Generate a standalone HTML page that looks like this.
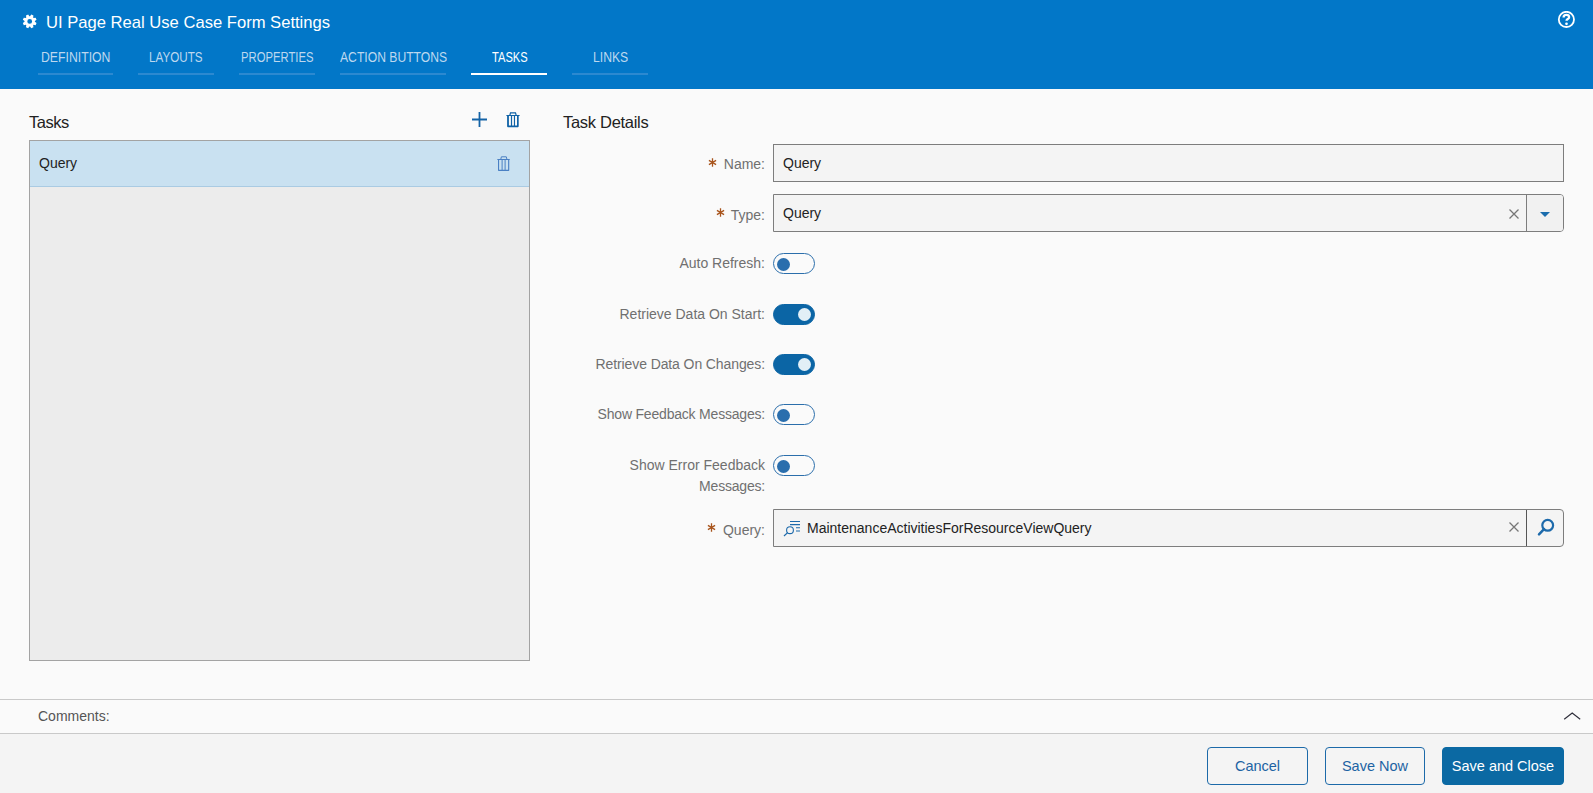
<!DOCTYPE html>
<html><head><meta charset="utf-8">
<style>
*{box-sizing:border-box;margin:0;padding:0}
html,body{width:1593px;height:793px;overflow:hidden;background:#fafafa;font-family:"Liberation Sans",sans-serif;color:#222}
.abs{position:absolute}
#hdr{position:absolute;left:0;top:0;width:1593px;height:89px;background:#0277c8}
#title{position:absolute;left:46px;top:12px;font-size:16.6px;color:#fff;line-height:22px;white-space:nowrap}
.ul{position:absolute;top:73px;height:2px;background:#2c89d0}
.ul.act{background:#fff}
.tt{position:absolute;top:47px;font-size:14px;line-height:20px;color:#bdd8ef;white-space:nowrap;transform-origin:0 0}
.tt.act{color:#fff}
.lbl{position:absolute;font-size:14px;color:#707070;text-align:right;white-space:nowrap;line-height:20px}
.inp{position:absolute;left:773px;width:791px;height:38px;background:#f4f4f4;border:1px solid #7d7d7d}
.itxt{position:absolute;font-size:14px;color:#222;line-height:20px;white-space:nowrap}
.tg{position:absolute;left:773px;width:42px;height:21px;border:1.5px solid #2b6eab;border-radius:11px}
.tg b{position:absolute;left:3px;top:3.5px;width:13px;height:13px;border-radius:50%;background:#2a6ead}
.tg.on{background:#0b65a5;border-color:#0b65a5}
.tg.on b{left:23.5px;top:2.7px;background:#e2eff6}
.btn{position:absolute;top:747px;height:38px;border:1px solid #1c6aa9;border-radius:4px;font-size:14.5px;color:#1d63a3;text-align:center;line-height:36px;background:#f4f4f4}
</style></head>
<body>
<div id="hdr">
  <svg class="abs" style="left:22px;top:14px" width="16" height="16" viewBox="0 0 16 16"><path fill="#fff" fill-rule="evenodd" d="M8.04 2.21 L9.24 0.57 L11.44 1.48 L11.13 3.49 L11.61 3.97 L13.62 3.66 L14.53 5.86 L12.89 7.06 L12.89 7.74 L14.53 8.94 L13.62 11.14 L11.61 10.83 L11.13 11.31 L11.44 13.32 L9.24 14.23 L8.04 12.59 L7.36 12.59 L6.16 14.23 L3.96 13.32 L4.27 11.31 L3.79 10.83 L1.78 11.14 L0.87 8.94 L2.51 7.74 L2.51 7.06 L0.87 5.86 L1.78 3.66 L3.79 3.97 L4.27 3.49 L3.96 1.48 L6.16 0.57 L7.36 2.21Z M10.10 7.40 A2.4 2.4 0 1 0 5.30 7.40 A2.4 2.4 0 1 0 10.10 7.40Z"/></svg>
  <div id="title">UI Page Real Use Case Form Settings</div>
  <div class="tt" style="left:40.8px;transform:scaleX(0.875)">DEFINITION</div>
  <div class="tt" style="left:149px;transform:scaleX(0.833)">LAYOUTS</div>
  <div class="tt" style="left:240.8px;transform:scaleX(0.806)">PROPERTIES</div>
  <div class="tt" style="left:340px;transform:scaleX(0.868)">ACTION BUTTONS</div>
  <div class="tt act" style="left:491.6px;transform:scaleX(0.795)">TASKS</div>
  <div class="tt" style="left:592.6px;transform:scaleX(0.87)">LINKS</div>
  <div class="ul" style="left:38px;width:75px"></div>
  <div class="ul" style="left:138px;width:76px"></div>
  <div class="ul" style="left:239px;width:76px"></div>
  <div class="ul" style="left:340px;width:106px"></div>
  <div class="ul act" style="left:471px;width:76px"></div>
  <div class="ul" style="left:572px;width:76px"></div>
  <svg class="abs" style="left:1557px;top:11px" width="19" height="19" viewBox="0 0 19 19"><circle cx="9.4" cy="8.4" r="7.6" fill="none" stroke="#fff" stroke-width="1.8"/><path d="M6.6 6.5c0-1.7 1.2-2.6 2.8-2.6s2.7.9 2.7 2.3c0 1.9-2.6 1.8-2.6 3.5" fill="none" stroke="#fff" stroke-width="2.3"/><circle cx="9.5" cy="12.8" r="1.35" fill="#fff"/></svg>
</div>

<!-- left tasks panel -->
<div class="abs" style="left:29px;top:111px;font-size:16.5px;line-height:22px;color:#222;letter-spacing:-0.5px">Tasks</div>
<svg class="abs" style="left:472px;top:112px" width="15" height="15" viewBox="0 0 15 15"><path d="M7.5 0v15M0 7.5h15" stroke="#1463a6" stroke-width="1.8"/></svg>
<svg class="abs" style="left:502px;top:108px" width="22" height="22" viewBox="0 0 22 22"><path d="M7.9 7.2L8.5 4.9H13.5L14.1 7.2" fill="none" stroke="#0f62a6" stroke-width="1.2"/><path fill="#0f62a6" d="M4.2 6.9H17.8L17.4 8.1H4.6z M5.1 8H6.9V17.4H15V8H16.7V18.6L16 19.2H5.8L5.1 18.6z M8.9 8H10.1V17.5H8.9z M11.9 8H13.05V17.5H11.9z"/></svg>
<div class="abs" style="left:29px;top:140px;width:501px;height:521px;background:#ececec;border:1px solid #a3a3a3">
  <div class="abs" style="left:0;top:0;width:499px;height:46px;background:#c9e1f1;border-bottom:1px solid #aacbe3"></div>
  <div class="abs" style="left:9px;top:12px;font-size:14px;line-height:20px;color:#222">Query</div>
  <svg class="abs" style="left:463px;top:11px" width="22" height="22" viewBox="0 0 22 22"><path d="M7.8 7.2L8.4 4.8H13.3L13.9 7.2" fill="none" stroke="#4a80c4" stroke-width="1"/><path fill="#4a80c4" d="M4.2 6.9H16.9L16.6 8H4.5z M5 8H6.1V17.8H15.1V8H16.25V18.5L15.7 18.9H5.6L5 18.5z M8.6 8H9.6V17.8H8.6z M11.6 8H12.6V17.8H11.6z"/></svg>
</div>

<!-- right details -->
<div class="abs" style="left:563px;top:111px;font-size:16.5px;line-height:22px;color:#222;letter-spacing:-0.3px">Task Details</div>

<svg class="abs" style="left:708px;top:158px" width="9" height="9" viewBox="0 0 9 9"><path d="M4.5 0.3v8.4M0.9 2.4l7.2 4.2M0.9 6.6l7.2-4.2" stroke="#a8541c" stroke-width="1.3"/></svg>
<div class="lbl" style="right:828px;top:154px">Name:</div>
<div class="inp" style="top:144px"></div>
<div class="itxt" style="left:783px;top:153px">Query</div>

<svg class="abs" style="left:716px;top:208px" width="9" height="9" viewBox="0 0 9 9"><path d="M4.5 0.3v8.4M0.9 2.4l7.2 4.2M0.9 6.6l7.2-4.2" stroke="#a8541c" stroke-width="1.3"/></svg>
<div class="lbl" style="right:828px;top:205px">Type:</div>
<div class="inp" style="top:194px;border-radius:0 4px 4px 0"></div>
<div class="abs" style="left:1527px;top:195px;width:36px;height:36px;background:#f1f1f1;border-radius:0 3px 3px 0"></div>
<div class="abs" style="left:1526px;top:195px;width:1px;height:36px;background:#7d7d7d"></div>
<div class="itxt" style="left:783px;top:203px">Query</div>
<svg class="abs" style="left:1509px;top:209px" width="10" height="10" viewBox="0 0 10 10"><path d="M0.5 0.5l9 9M9.5 0.5l-9 9" stroke="#777" stroke-width="1.3"/></svg>
<svg class="abs" style="left:1540px;top:212px" width="10" height="5" viewBox="0 0 10 5"><path d="M0 0h10L5 5z" fill="#1b6dad"/></svg>

<div class="lbl" style="right:828px;top:253px">Auto Refresh:</div>
<div class="tg" style="top:253px"><b></b></div>

<div class="lbl" style="right:828px;top:304px">Retrieve Data On Start:</div>
<div class="tg on" style="top:304px"><b></b></div>

<div class="lbl" style="right:828px;top:354px;letter-spacing:-0.1px">Retrieve Data On Changes:</div>
<div class="tg on" style="top:354px"><b></b></div>

<div class="lbl" style="right:828px;top:404px;letter-spacing:-0.2px">Show Feedback Messages:</div>
<div class="tg" style="top:404px"><b></b></div>

<div class="lbl" style="right:828px;top:455px;line-height:21px">Show Error Feedback<br><span style="letter-spacing:-0.2px">Messages:</span></div>
<div class="tg" style="top:455px"><b></b></div>

<svg class="abs" style="left:707px;top:523px" width="9" height="9" viewBox="0 0 9 9"><path d="M4.5 0.3v8.4M0.9 2.4l7.2 4.2M0.9 6.6l7.2-4.2" stroke="#a8541c" stroke-width="1.3"/></svg>
<div class="lbl" style="right:828px;top:520px">Query:</div>
<div class="inp" style="top:509px;border-radius:0 4px 4px 0"></div>
<div class="abs" style="left:1526px;top:510px;width:1.3px;height:36px;background:#555"></div>
<svg class="abs" style="left:780px;top:518px" width="22" height="22" viewBox="0 0 22 22"><circle cx="10" cy="12.2" r="3.4" fill="none" stroke="#1d6aab" stroke-width="1.1"/><path d="M7.6 14.6L4 18" stroke="#1d6aab" stroke-width="1.2"/><path d="M10 3.5h10M10 6.6h10M16 9.7h4M16 13h4" stroke="#1d6aab" stroke-width="1.1"/></svg>
<div class="itxt" style="left:807px;top:518px">MaintenanceActivitiesForResourceViewQuery</div>
<svg class="abs" style="left:1509px;top:522px" width="10" height="10" viewBox="0 0 10 10"><path d="M0.5 0.5l9 9M9.5 0.5l-9 9" stroke="#777" stroke-width="1.3"/></svg>
<svg class="abs" style="left:1534px;top:515px" width="22" height="24" viewBox="0 0 22 24"><circle cx="13.7" cy="10.3" r="5.4" fill="none" stroke="#1d6aab" stroke-width="2.2"/><path d="M10 14.2L5 19.4" stroke="#1d6aab" stroke-width="2.5" stroke-linecap="round"/></svg>

<!-- comments -->
<div class="abs" style="left:0;top:699px;width:1593px;height:35px;background:#fafafa;border-top:1px solid #c9c9c9;border-bottom:1px solid #c9c9c9"></div>
<div class="abs" style="left:38px;top:706px;font-size:14px;line-height:20px;color:#555">Comments:</div>
<svg class="abs" style="left:1563px;top:711px" width="18" height="11" viewBox="0 0 18 11"><path d="M1.2 8.3L9.2 2l8 6.3" fill="none" stroke="#2e2e3a" stroke-width="1.15"/></svg>

<!-- footer -->
<div class="abs" style="left:0;top:734px;width:1593px;height:59px;background:#f4f4f4"></div>
<div class="btn" style="left:1207px;width:101px">Cancel</div>
<div class="btn" style="left:1325px;width:100px">Save Now</div>
<div class="btn" style="left:1442px;width:122px;background:#0b69a3;border-color:#0b69a3;color:#fff">Save and Close</div>
</body></html>
